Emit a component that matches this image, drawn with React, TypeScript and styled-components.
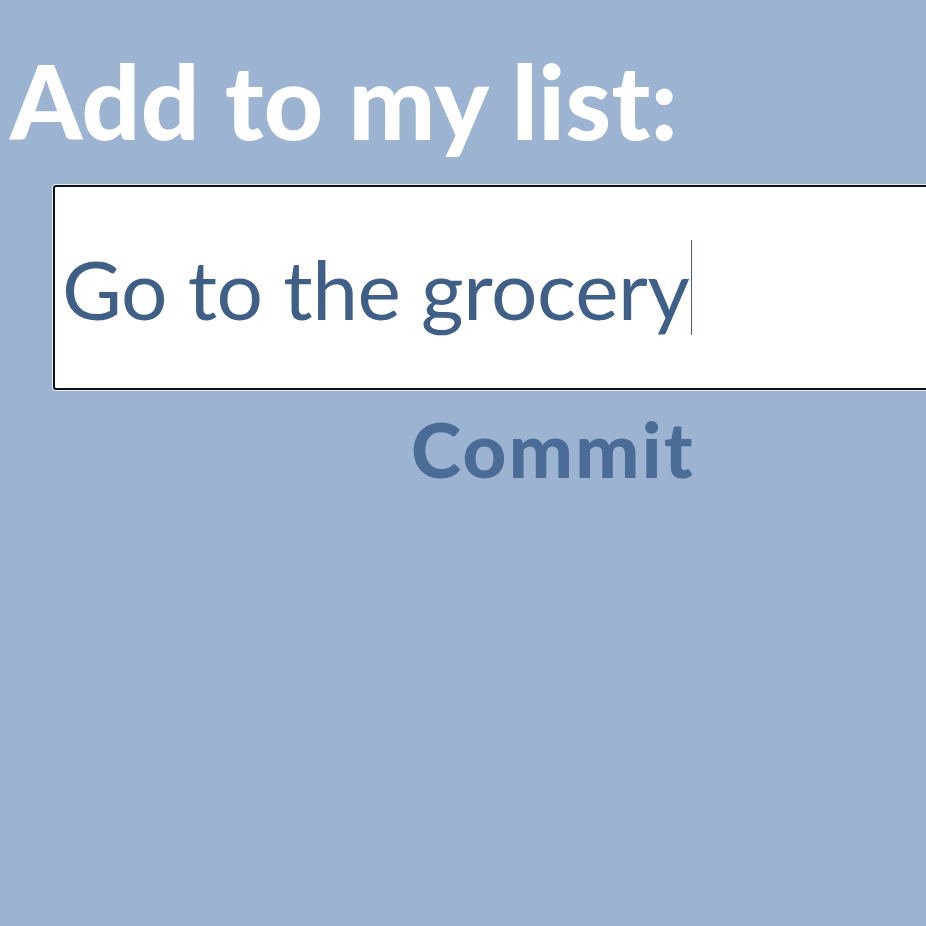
import React from "react";
import styled, { createGlobalStyle } from "styled-components";

const Global = createGlobalStyle`
  html, body { margin: 0; padding: 0; background: #9cb4d1; overflow: hidden; }
  body { width: 926px; height: 926px; }
`;

const Page = styled.div`
  padding: 40px 0 0 10px;
  display: flex;
  flex-direction: column;
  font-family: Lato, "Open Sans", sans-serif;
`;

const Heading = styled.h1`
  margin: 0;
  font-family: Lato, sans-serif;
  font-weight: 900;
  font-size: 103px;
  line-height: 120px;
  letter-spacing: 0.4px;
  color: #ffffff;
  white-space: nowrap;
`;

const Form = styled.form`
  margin: 25px 0 0 43px;
  width: 1000px;
  display: flex;
  flex-direction: column;
  align-items: center;
`;

const TextBox = styled.div`
  box-sizing: border-box;
  width: 100%;
  height: 205px;
  background: #ffffff;
  border: 2px solid #111;
  border-radius: 3px;
  box-shadow: 0 0 0 1px #e6edf3;
  display: flex;
  align-items: center;
  padding-left: 7px;
`;

const Value = styled.span`
  font-family: Lato, sans-serif;
  font-size: 82px;
  letter-spacing: -0.4px;
  color: #3f5f86;
  white-space: nowrap;
`;

const Caret = styled.span`
  display: inline-block;
  width: 1px;
  height: 95px;
  background: #3f5f86;
  margin-left: 2px;
`;

const CommitButton = styled.button`
  margin-top: 14px;
  background: none;
  border: none;
  padding: 0;
  font-family: Lato, sans-serif;
  font-weight: 900;
  font-size: 76px;
  line-height: 90px;
  letter-spacing: 2.4px;
  color: #4a6c96;
  cursor: pointer;
`;

export default function App() {
  return (
    <>
      <Global />
      <Page>
        <Heading>Add to my list:</Heading>
        <Form onSubmit={(e) => e.preventDefault()}>
          <TextBox role="textbox">
            <Value>Go to the grocery</Value>
            <Caret />
          </TextBox>
          <CommitButton type="submit">Commit</CommitButton>
        </Form>
      </Page>
    </>
  );
}
